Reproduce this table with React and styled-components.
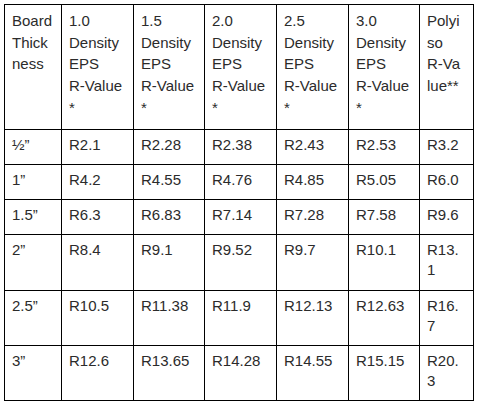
import React from 'react'
import styled, { createGlobalStyle } from 'styled-components'

const GlobalStyle = createGlobalStyle`
  body {
    margin: 0;
    background: #fff;
    font-family: Arial, "Liberation Sans", sans-serif;
  }
`

const header = [
  'Board\nThick\nness',
  '1.0\nDensity\nEPS\nR-Value\n*',
  '1.5\nDensity\nEPS\nR-Value\n*',
  '2.0\nDensity\nEPS\nR-Value\n*',
  '2.5\nDensity\nEPS\nR-Value\n*',
  '3.0\nDensity\nEPS\nR-Value\n*',
  'Polyi\nso\nR-Va\nlue**',
]

const rows = [
  ['½”', 'R2.1', 'R2.28', 'R2.38', 'R2.43', 'R2.53', 'R3.2'],
  ['1”', 'R4.2', 'R4.55', 'R4.76', 'R4.85', 'R5.05', 'R6.0'],
  ['1.5”', 'R6.3', 'R6.83', 'R7.14', 'R7.28', 'R7.58', 'R9.6'],
  ['2”', 'R8.4', 'R9.1', 'R9.52', 'R9.7', 'R10.1', 'R13.\n1'],
  ['2.5”', 'R10.5', 'R11.38', 'R11.9', 'R12.13', 'R12.63', 'R16.\n7'],
  ['3”', 'R12.6', 'R13.65', 'R14.28', 'R14.55', 'R15.15', 'R20.\n3'],
]

const widths = [57, 72, 71, 72, 72, 71, 54]

const App = () => {
  return (
    <Page>
      <GlobalStyle />
      <Table>
        <colgroup>
          {widths.map((w, i) => <col key={i} style={{ width: w }} />)}
        </colgroup>
        <thead>
          <tr>
            {header.map((h, i) => <HeadCell key={i}>{h}</HeadCell>)}
          </tr>
        </thead>
        <tbody>
          {rows.map((r, ri) => (
            <tr key={ri}>
              {r.map((c, ci) => <Cell key={ci}>{c}</Cell>)}
            </tr>
          ))}
        </tbody>
      </Table>
    </Page>
  )
}

export default App

const Page = styled.div`
  padding: 4px;
`
const Table = styled.table`
  border-collapse: collapse;
  table-layout: fixed;
  width: 470px;
`
const Cell = styled.td`
  border: 1px solid #000;
  padding: 5px 7px 9px;
  vertical-align: top;
  white-space: pre-line;
  font-size: 15px;
  line-height: 20.2px;
  color: #2b2b2b;
`
const HeadCell = styled(Cell).attrs({ as: 'th' })`
  padding: 5px 7px 10px;
  font-weight: normal;
  text-align: left;
  line-height: 21.7px;
`
